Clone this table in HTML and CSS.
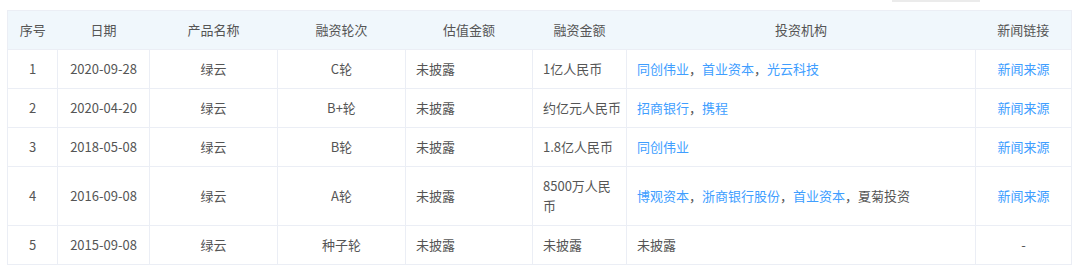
FILE: index.html
```html
<!DOCTYPE html>
<html lang="zh-CN">
<head>
<meta charset="utf-8">
<title>融资历程</title>
<link rel="stylesheet" href="styles.css">
</head>
<body>
<div class="toolbar"><div class="toolbar-stub"></div></div>
<table class="fin-table">
  <colgroup>
    <col class="c-idx"><col class="c-date"><col class="c-name"><col class="c-round"><col class="c-val"><col class="c-amt"><col class="c-inv"><col class="c-news">
  </colgroup>
  <thead>
    <tr>
      <th>序号</th><th>日期</th><th>产品名称</th><th>融资轮次</th><th>估值金额</th><th>融资金额</th><th>投资机构</th><th>新闻链接</th>
    </tr>
  </thead>
  <tbody>
    <tr>
      <td class="center">1</td><td class="center">2020-09-28</td><td class="center">绿云</td><td class="center">C轮</td>
      <td>未披露</td><td>1亿人民币</td>
      <td><a>同创伟业</a>，<a>首业资本</a>，<a>光云科技</a></td>
      <td class="center"><a>新闻来源</a></td>
    </tr>
    <tr>
      <td class="center">2</td><td class="center">2020-04-20</td><td class="center">绿云</td><td class="center">B+轮</td>
      <td>未披露</td><td>约亿元人民币</td>
      <td><a>招商银行</a>，<a>携程</a></td>
      <td class="center"><a>新闻来源</a></td>
    </tr>
    <tr>
      <td class="center">3</td><td class="center">2018-05-08</td><td class="center">绿云</td><td class="center">B轮</td>
      <td>未披露</td><td>1.8亿人民币</td>
      <td><a>同创伟业</a></td>
      <td class="center"><a>新闻来源</a></td>
    </tr>
    <tr>
      <td class="center">4</td><td class="center">2016-09-08</td><td class="center">绿云</td><td class="center">A轮</td>
      <td>未披露</td><td>8500万人民币</td>
      <td><a>博观资本</a>，<a>浙商银行股份</a>，<a>首业资本</a>，夏菊投资</td>
      <td class="center"><a>新闻来源</a></td>
    </tr>
    <tr>
      <td class="center">5</td><td class="center">2015-09-08</td><td class="center">绿云</td><td class="center">种子轮</td>
      <td>未披露</td><td>未披露</td>
      <td>未披露</td>
      <td class="center">-</td>
    </tr>
  </tbody>
</table>
</body>
</html>
```

FILE: styles.css
```css
html, body {
  margin: 0;
  background: #ffffff;
}
body {
  padding: 0 8px 0 7px;
  font-family: "Noto Sans CJK SC", "Microsoft YaHei", sans-serif;
  font-size: 13px;
  color: #555555;
}
.toolbar {
  height: 2px;
  display: flex;
}
.toolbar-stub {
  margin-left: 885px;
  width: 88px;
  height: 2px;
  background: #ebebeb;
}
.fin-table {
  margin-top: 8px;
  width: 1065px;
  table-layout: fixed;
  border-collapse: collapse;
  border: 1px solid #ebeef5;
}
.c-idx { width: 50px; }
.c-date { width: 92px; }
.c-name { width: 128px; }
.c-round { width: 128px; }
.c-val { width: 127px; }
.c-amt { width: 94px; }
.c-inv { width: 349px; }
.c-news { width: 96px; }

.fin-table th {
  background: #f0f7fc;
  font-weight: normal;
  color: #555555;
  text-align: center;
  line-height: 20px;
  padding: 9px 0;
  border-bottom: 1px solid #ebeef5;
}
.fin-table td {
  line-height: 20px;
  padding: 9px 4px 9px 10px;
  border: 1px solid #ebeef5;
  text-align: left;
  vertical-align: middle;
  color: #555555;
}
.fin-table td.center {
  text-align: center;
  padding-left: 4px;
}
.fin-table a {
  color: #409eff;
  text-decoration: none;
  cursor: pointer;
}
```
